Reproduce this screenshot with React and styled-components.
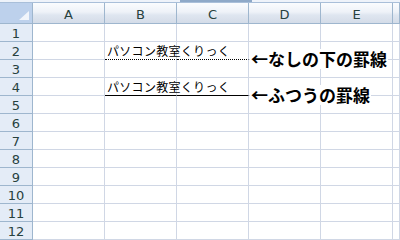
import React from "react";
import styled, { createGlobalStyle } from "styled-components";

const GlobalStyle = createGlobalStyle`
  html, body { margin: 0; padding: 0; background: #ffffff; }
  body { font-family: "Noto Sans CJK JP", "DejaVu Sans", sans-serif; }
`;

const Sheet = styled.div`
  width: 400px;
  height: 240px;
  overflow: hidden;
  background: #ffffff;
`;

const TopStrip = styled.div`
  display: grid;
  grid-template-columns: 180px 72px 1fr;
  height: 2px;
  background: #eef3fa;
  border-bottom: 1px solid #a9bfd9;
`;

const StripBand = styled.div`
  background: ${(p) => (p.$dark ? "#8ea9c8" : "transparent")};
`;

const Grid = styled.div`
  position: relative;
  display: grid;
  grid-template-columns: 33px repeat(5, 72px) 1fr;
  grid-template-rows: 21px;
  grid-auto-rows: 18px;
`;

const Corner = styled.div`
  position: relative;
  box-sizing: border-box;
  background: #bdd1ec;
  border-right: 1px solid #9eb6ce;
  border-bottom: 1px solid #9eb6ce;
  &::after {
    content: "";
    position: absolute;
    right: 3px;
    bottom: 3px;
    width: 0;
    height: 0;
    border-left: 10px solid transparent;
    border-bottom: 9px solid #f1f5fb;
  }
`;

const ColHeader = styled.div`
  box-sizing: border-box;
  display: flex;
  align-items: center;
  justify-content: center;
  padding-top: 2px;
  background: linear-gradient(#fafcfe 0%, #eef2f8 45%, #dfe6f0 60%, #d4dce8 100%);
  border-right: 1px solid #9eb6ce;
  border-bottom: 1px solid #9eb6ce;
  color: #27413e;
  font-family: "DejaVu Sans", sans-serif;
  font-size: 13px;
`;

const RowHeader = styled.div`
  box-sizing: border-box;
  display: flex;
  align-items: center;
  justify-content: center;
  background: #e4ecf7;
  border-right: 1px solid #9eb6ce;
  border-bottom: 1px solid #9eb6ce;
  color: #27413e;
  font-family: "DejaVu Sans", sans-serif;
  font-size: 13px;
  padding-top: 1px;
`;

const Cell = styled.div`
  box-sizing: border-box;
  display: flex;
  align-items: flex-end;
  border-right: 1px solid #d0d7e5;
  border-bottom: 1px
    ${(p) =>
      p.$edge === "dotted"
        ? "dotted #000000"
        : p.$edge === "solid"
        ? "solid #000000"
        : "solid #d0d7e5"};
`;

const CellText = styled.span`
  white-space: nowrap;
  padding-left: 2px;
  padding-bottom: 1px;
  font-size: 12px;
  line-height: 14px;
  letter-spacing: 0.3px;
  color: #000000;
`;

const Note = styled.div`
  position: absolute;
  left: 250px;
  top: ${(p) => p.$top}px;
  background: #ffffff;
  padding: 0 1px;
  font-size: 17px;
  font-weight: 700;
  line-height: 20px;
  color: #000000;
  white-space: nowrap;
`;

const cols = ["A", "B", "C", "D", "E", ""];
const rows = Array.from({ length: 12 }, (_, i) => i + 1);

const content = {
  2: { text: "パソコン教室くりっく", edge: "dotted" },
  4: { text: "パソコン教室くりっく", edge: "solid" },
};

export default function App() {
  return (
    <Sheet>
      <GlobalStyle />
      <TopStrip>
        <StripBand />
        <StripBand $dark />
        <StripBand />
      </TopStrip>
      <Grid>
        <Corner />
        {cols.map((c, i) => (
          <ColHeader key={"h" + i}>{c}</ColHeader>
        ))}
        {rows.map((r) => {
          const row = content[r];
          return (
            <React.Fragment key={r}>
              <RowHeader>{r}</RowHeader>
              {cols.map((c, i) => {
                const bordered = row && (c === "B" || c === "C");
                return (
                  <Cell key={c + i} $edge={bordered ? row.edge : undefined}>
                    {row && c === "B" ? <CellText>{row.text}</CellText> : null}
                  </Cell>
                );
              })}
            </React.Fragment>
          );
        })}
        <Note $top={46}>←なしの下の罫線</Note>
        <Note $top={82}>←ふつうの罫線</Note>
      </Grid>
    </Sheet>
  );
}
